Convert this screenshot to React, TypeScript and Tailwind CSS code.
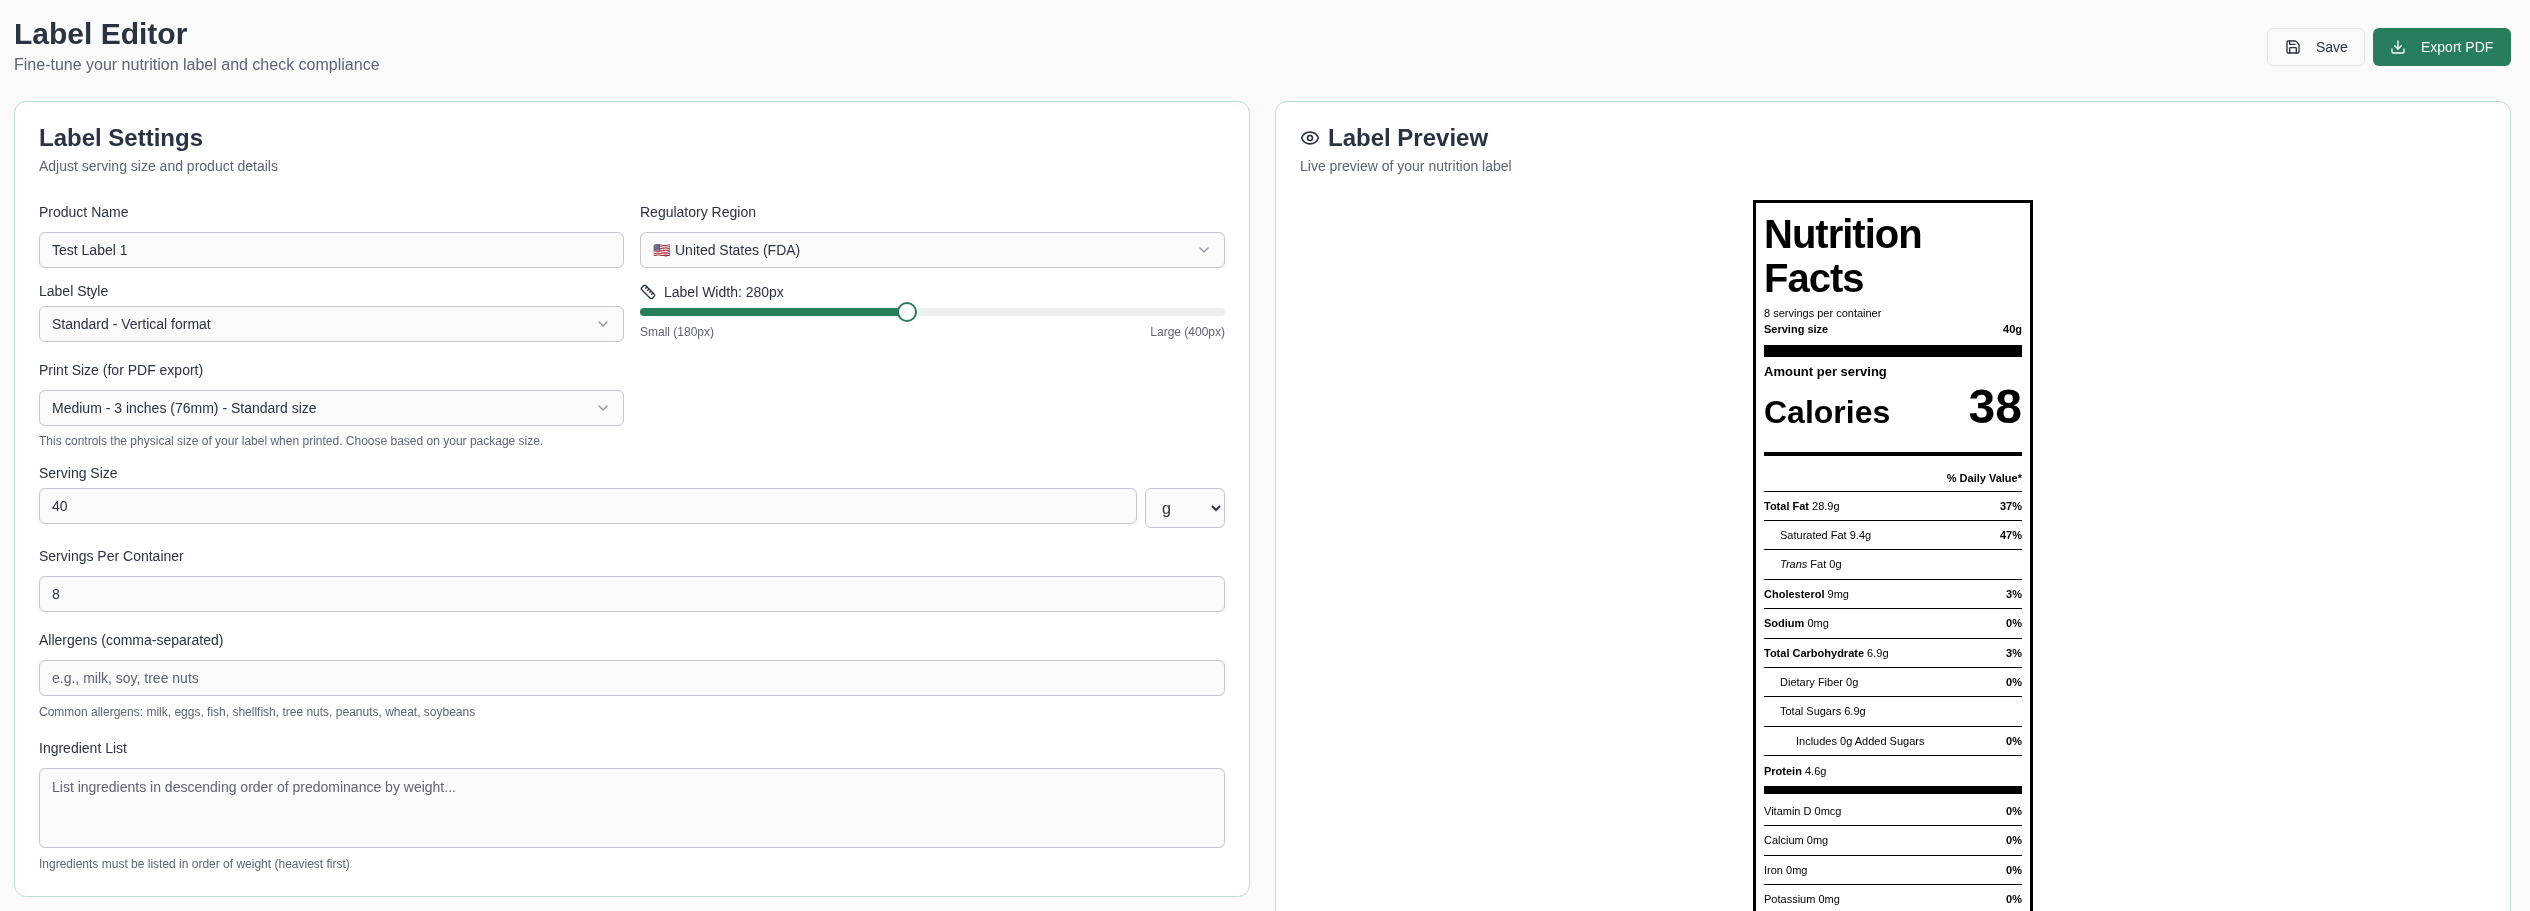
import { ChevronDown, Download, Eye, Ruler, Save } from 'lucide-react';
import type { ReactNode } from 'react';

interface RowProps {
  name: ReactNode;
  value?: string;
  percent?: string;
  indent?: 0 | 1 | 2;
  bold?: boolean;
  last?: boolean;
}

const inputClass =
  'block w-full h-9 rounded-md border border-[#c4c6d2] bg-[#fafafa] px-3 text-sm text-[#2a3342] placeholder:text-[#5d6475] outline-none';

function FieldLabel({ children, className = 'mb-2.5' }: { children: ReactNode; className?: string }) {
  return <div className={`text-sm leading-5 text-[#2a3342] ${className}`}>{children}</div>;
}

function Hint({ children, className = '' }: { children: ReactNode; className?: string }) {
  return <p className={`text-xs leading-4 text-[#5d6475] ${className}`}>{children}</p>;
}

function FakeSelect({ children }: { children: ReactNode }) {
  return (
    <div className="flex h-9 w-full items-center justify-between rounded-md border border-[#c4c6d2] bg-[#fafafa] px-3 text-sm text-[#2a3342]">
      <span className="flex items-center gap-[5px]">{children}</span>
      <ChevronDown className="size-4 opacity-50" />
    </div>
  );
}

function WidthSlider({ value, min, max }: { value: number; min: number; max: number }) {
  const pct = (value - min) / (max - min);
  const left = `calc(${pct * 100}% + ${10 - pct * 20}px)`;
  return (
    <div className="relative h-5 w-full">
      <div className="absolute inset-x-0 top-1.5 h-2 overflow-hidden rounded-full bg-[#eeeff1]">
        <div className="h-full bg-[#287d5c]" style={{ width: left }} />
      </div>
      <div
        className="absolute top-0 size-5 -translate-x-1/2 rounded-full border-2 border-[#287d5c] bg-white"
        style={{ left }}
      />
    </div>
  );
}

function Row({ name, value, percent, indent = 0, bold = false, last = false }: RowProps) {
  const indentClass = indent === 2 ? 'pl-8' : indent === 1 ? 'pl-4' : '';
  return (
    <div
      className={`flex items-center justify-between h-[29.4px] text-[11px] ${last ? '' : 'border-b border-black'} ${indentClass}`}
    >
      <span>
        <span className={bold ? 'font-bold' : ''}>{name}</span> {value}
      </span>
      {percent && <span className="font-bold">{percent}</span>}
    </div>
  );
}

function NutritionLabel() {
  return (
    <div className="mx-auto w-[280px] border-[3px] border-black bg-white px-2 pb-6 pt-[9px] text-black">
      <div className="text-[40px] font-bold leading-[44px] tracking-[-1px]">Nutrition Facts</div>
      <div className="mt-[5px] text-[11px] leading-[16px]">8 servings per container</div>
      <div className="flex justify-between text-[11px] font-bold leading-[16px]">
        <span>Serving size</span>
        <span>40g</span>
      </div>
      <div className="mt-2 h-3 bg-black" />
      <div className="mt-[7px] text-[13px] font-bold leading-[16px]">Amount per serving</div>
      <div className="flex h-[54px] items-baseline justify-between leading-none">
        <span className="text-[32px] font-bold">Calories</span>
        <span className="text-[48px] font-bold leading-[54px]">38</span>
      </div>
      <div className="mt-[18px] h-1 bg-black" />
      <div className="h-[35.7px] border-b border-black pt-3.5 text-right text-[11px] font-bold leading-[16px]">
        % Daily Value*
      </div>
      <Row name="Total Fat" value="28.9g" percent="37%" bold />
      <Row name="Saturated Fat" value="9.4g" percent="47%" indent={1} />
      <Row
        name={
          <>
            <i>Trans</i> Fat
          </>
        }
        value="0g"
        indent={1}
      />
      <Row name="Cholesterol" value="9mg" percent="3%" bold />
      <Row name="Sodium" value="0mg" percent="0%" bold />
      <Row name="Total Carbohydrate" value="6.9g" percent="3%" bold />
      <Row name="Dietary Fiber" value="0g" percent="0%" indent={1} />
      <Row name="Total Sugars" value="6.9g" indent={1} />
      <Row name="Includes 0g Added Sugars" percent="0%" indent={2} />
      <Row name="Protein" value="4.6g" bold last />
      <div className="mb-[3.5px] h-2 bg-black" />
      <Row name="Vitamin D" value="0mcg" percent="0%" />
      <Row name="Calcium" value="0mg" percent="0%" />
      <Row name="Iron" value="0mg" percent="0%" />
      <Row name="Potassium" value="0mg" percent="0%" />
    </div>
  );
}

export default function App() {
  return (
    <div className="h-screen overflow-hidden bg-[#fafafa] font-['Liberation_Sans',Arial,sans-serif] text-[#2a3342]">
      <div className="pl-3.5 pr-[19px] pt-4 will-change-transform">
        {/* Header */}
        <div className="mb-6 flex items-center justify-between">
          <div>
            <h1 className="text-3xl font-bold leading-9">Label Editor</h1>
            <p className="mt-px text-base leading-6 text-[#5d6475]">
              Fine-tune your nutrition label and check compliance
            </p>
          </div>
          <div className="flex gap-2">
            <button className="flex h-[38px] w-[98px] items-center gap-[15px] rounded-md border border-[#e4e5e8] bg-[#fafafa] pl-[17px] text-sm text-[#2a3342]">
              <Save className="size-4" />
              Save
            </button>
            <button className="flex h-[38px] w-[138px] items-center gap-[15px] rounded-md bg-[#287d5c] pl-[17px] text-sm text-[#fafafa]">
              <Download className="size-4" />
              Export PDF
            </button>
          </div>
        </div>

        <div className="grid grid-cols-2 items-start gap-[25px]">
          {/* Settings */}
          <div className="rounded-xl border border-[#b5dfd0] bg-white p-6">
            <h2 className="text-2xl font-bold leading-6">Label Settings</h2>
            <p className="mt-1.5 text-sm leading-5 text-[#5d6475]">Adjust serving size and product details</p>

            <div className="mt-[26px] grid grid-cols-2 gap-x-4">
              <div>
                <FieldLabel>Product Name</FieldLabel>
                <input className={inputClass} defaultValue="Test Label 1" />
                <FieldLabel className="mb-[5px] mt-[13px]">Label Style</FieldLabel>
                <FakeSelect>Standard - Vertical format</FakeSelect>
                <FieldLabel className="mb-2.5 mt-[18px]">Print Size (for PDF export)</FieldLabel>
                <FakeSelect>Medium - 3 inches (76mm) - Standard size</FakeSelect>
                <Hint className="mt-[7px]">
                  This controls the physical size of your label when printed. Choose based on your package size.
                </Hint>
              </div>
              <div>
                <FieldLabel>Regulatory Region</FieldLabel>
                <FakeSelect>
                  <span>🇺🇸</span> United States (FDA)
                </FakeSelect>
                <div className="mt-3.5 flex items-center gap-2 text-sm leading-5">
                  <Ruler className="size-4" />
                  Label Width: 280px
                </div>
                <WidthSlider value={280} min={180} max={400} />
                <div className="mt-0.5 flex justify-between">
                  <Hint>Small (180px)</Hint>
                  <Hint>Large (400px)</Hint>
                </div>
              </div>
            </div>

            <FieldLabel className="mb-[5px] mt-3.5">Serving Size</FieldLabel>
            <div className="flex items-start gap-2">
              <input className={inputClass} defaultValue="40" />
              <select className="h-10 w-20 shrink-0 rounded-md border border-[#c4c6d2] bg-[#fafafa] px-3 text-base text-[#2a3342]">
                <option>g</option>
                <option>ml</option>
              </select>
            </div>

            <FieldLabel className="mb-2.5 mt-[18px]">Servings Per Container</FieldLabel>
            <input className={inputClass} defaultValue="8" />

            <FieldLabel className="mb-2.5 mt-[18px]">Allergens (comma-separated)</FieldLabel>
            <input className={inputClass} placeholder="e.g., milk, soy, tree nuts" />
            <Hint className="mt-2">
              Common allergens: milk, eggs, fish, shellfish, tree nuts, peanuts, wheat, soybeans
            </Hint>

            <FieldLabel className="mb-2.5 mt-[18px]">Ingredient List</FieldLabel>
            <textarea
              className="block h-20 w-full resize-none rounded-md border border-[#c4c6d2] bg-[#fafafa] px-3 py-2 text-sm text-[#2a3342] outline-none placeholder:text-[#5d6475]"
              placeholder="List ingredients in descending order of predominance by weight..."
            />
            <Hint className="mt-2">Ingredients must be listed in order of weight (heaviest first)</Hint>
          </div>

          {/* Preview */}
          <div className="rounded-xl border border-[#b5dfd0] bg-white p-6">
            <h2 className="flex items-center gap-2 text-2xl font-bold leading-6">
              <Eye className="size-5" />
              Label Preview
            </h2>
            <p className="mt-1.5 text-sm leading-5 text-[#5d6475]">Live preview of your nutrition label</p>
            <div className="mt-6">
              <NutritionLabel />
            </div>
          </div>
        </div>
      </div>
    </div>
  );
}
